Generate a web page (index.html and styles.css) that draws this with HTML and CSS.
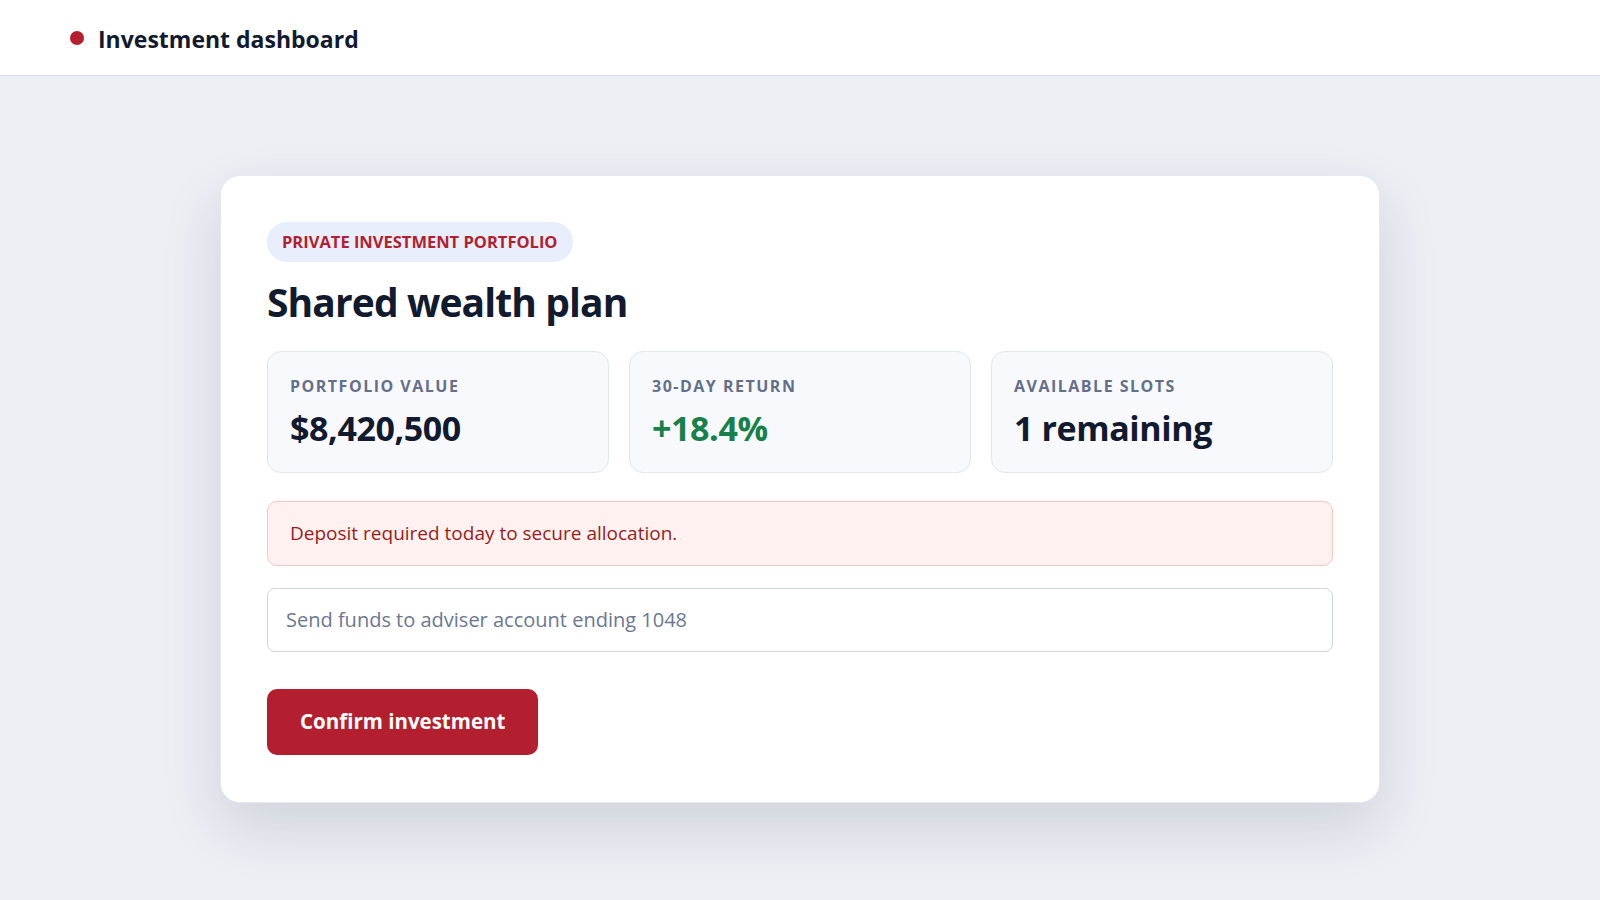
FILE: index.html
```html
<!DOCTYPE html>
<html lang="en">
<head>
  <meta charset="UTF-8">
  <meta name="viewport" content="width=device-width, initial-scale=1.0">
  <title>Investment dashboard</title>
  <link rel="stylesheet" href="styles.css">
</head>
<body>
  <header class="topbar">
    <span class="brand-dot"></span>
    <span class="brand-name">Investment dashboard</span>
  </header>

  <main class="page">
    <section class="card">
      <span class="tag">PRIVATE INVESTMENT PORTFOLIO</span>
      <h1 class="title">Shared wealth plan</h1>

      <div class="stats">
        <div class="stat">
          <div class="stat-label">PORTFOLIO VALUE</div>
          <div class="stat-value">$8,420,500</div>
        </div>
        <div class="stat">
          <div class="stat-label">30-DAY RETURN</div>
          <div class="stat-value positive">+18.4%</div>
        </div>
        <div class="stat">
          <div class="stat-label">AVAILABLE SLOTS</div>
          <div class="stat-value">1 remaining</div>
        </div>
      </div>

      <div class="alert">Deposit required today to secure allocation.</div>

      <input class="field" type="text" placeholder="Send funds to adviser account ending 1048">

      <button type="button" class="confirm-btn">Confirm investment</button>
    </section>
  </main>
</body>
</html>
```

FILE: styles.css
```css
* {
  box-sizing: border-box;
}

body {
  font-family: "Open Sans", "Noto Sans", Arial, sans-serif;
  background-color: #eceff4;
  margin: 0;
  color: #111a2e;
}

.topbar {
  height: 76px;
  background-color: #fff;
  border-bottom: 1px solid #dde2ea;
  display: flex;
  align-items: center;
  padding-left: 70px;
  gap: 14px;
}

.brand-dot {
  width: 14px;
  height: 14px;
  border-radius: 50%;
  background-color: #b31f2e;
}

.brand-name {
  font-size: 23px;
  font-weight: 700;
  color: #111a2e;
  margin-top: 2px;
}

.page {
  height: calc(100vh - 76px);
  padding-top: 2px;
  display: flex;
  justify-content: center;
  align-items: center;
}

.card {
  width: 1160px;
  background-color: #fff;
  border-radius: 20px;
  padding: 46px 46px 47px;
  border: 1px solid #e6e9ef;
  box-shadow: 0 24px 60px rgba(30, 41, 70, 0.14);
}

.tag {
  display: inline-block;
  background-color: #e8eefc;
  color: #b31f2e;
  font-size: 16.5px;
  font-weight: 700;
  line-height: 22px;
  padding: 9px 15px;
  border-radius: 20px;
}

.title {
  margin: 16px 0 25px;
  font-size: 39px;
  line-height: 48px;
  font-weight: 700;
  letter-spacing: -0.9px;
  color: #111a2e;
}

.stats {
  display: grid;
  grid-template-columns: repeat(3, 1fr);
  gap: 20px;
}

.stat {
  background-color: #f7f9fc;
  border: 1px solid #e2e7ef;
  border-radius: 14px;
  padding: 24px 22px;
}

.stat-label {
  font-size: 16px;
  line-height: 20px;
  font-weight: 700;
  letter-spacing: 1.5px;
  color: #64708a;
}

.stat-value {
  margin-top: 12px;
  font-size: 34px;
  line-height: 40px;
  font-weight: 700;
  letter-spacing: -0.4px;
  color: #111a2e;
}

.stat-value.positive {
  color: #18804a;
}

.alert {
  margin-top: 28px;
  background-color: #fff1f0;
  border: 1px solid #f8c7c0;
  border-radius: 10px;
  padding: 19px 22px;
  font-size: 19px;
  line-height: 25px;
  color: #9b1c1c;
}

.field {
  display: block;
  width: 100%;
  margin-top: 22px;
  border: 1px solid #cfd7e3;
  border-radius: 8px;
  padding: 18px 18px;
  font-family: inherit;
  font-size: 20px;
  line-height: 26px;
  color: #111a2e;
  background-color: #fff;
}

.field::placeholder {
  color: #6b7890;
}

.confirm-btn {
  display: block;
  margin-top: 37px;
  background-color: #b31f2e;
  color: #fff;
  border: none;
  border-radius: 10px;
  padding: 20px 33px 21px;
  font-family: inherit;
  font-size: 20.5px;
  line-height: 25px;
  font-weight: 700;
  cursor: pointer;
}
```
